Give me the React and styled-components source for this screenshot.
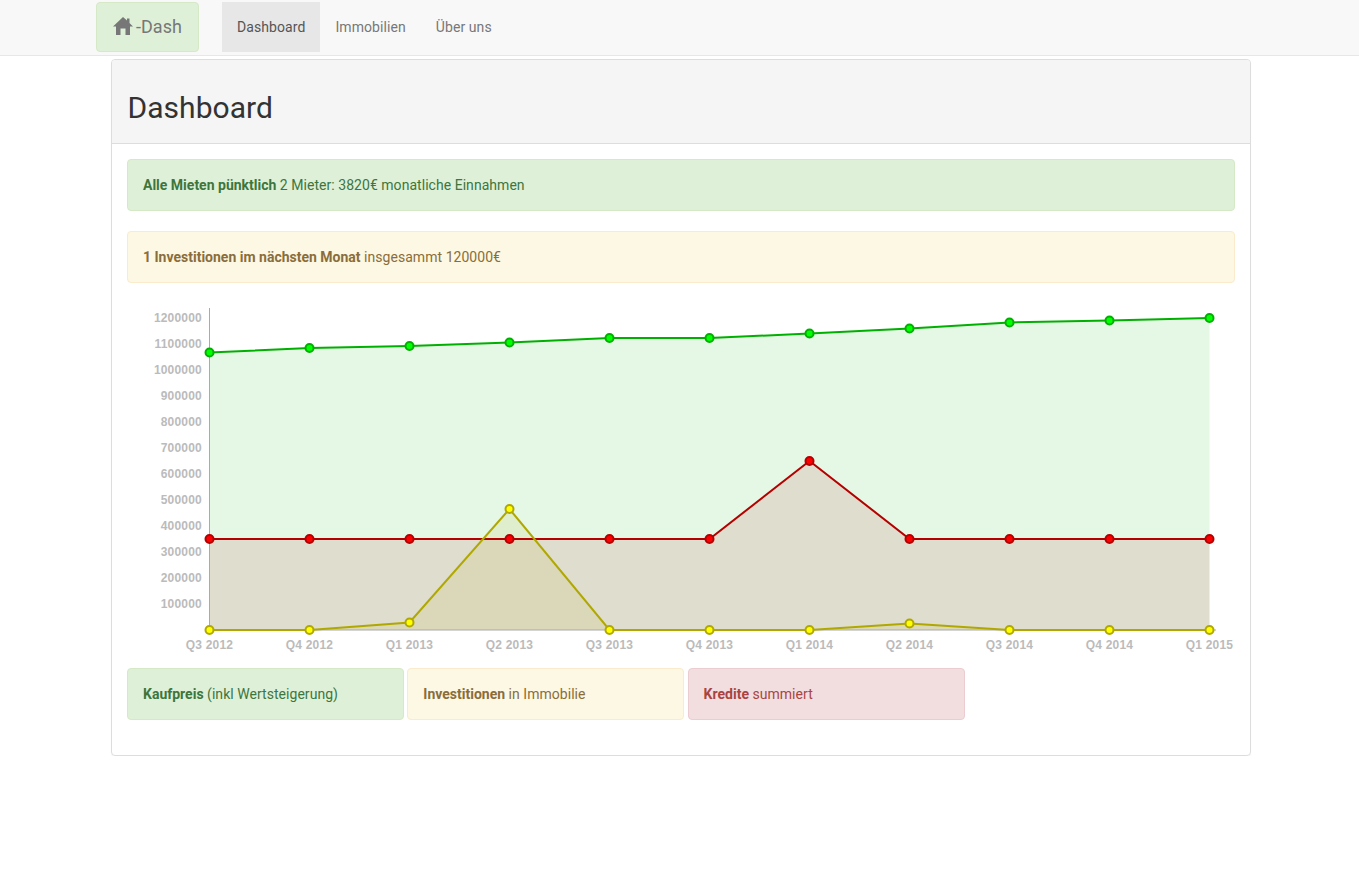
import styled, { createGlobalStyle } from 'styled-components';

const GlobalStyle = createGlobalStyle`
    * { box-sizing: border-box; }
    body {
        margin: 0;
        background: #fff;
        color: #333;
        font-family: Roboto, "Liberation Sans", sans-serif;
        font-size: 14px;
        line-height: 20px;
        letter-spacing: 0.04px;
    }
`

const Navbar = styled.nav`
    display: flex;
    align-items: flex-start;
    height: 56px;
    padding: 2px 0 0 96px;
    background: #f8f8f8;
    border-bottom: 1px solid #e7e7e7;
`

const Brand = styled.a`
    display: flex;
    align-items: center;
    gap: 3px;
    width: 103px;
    height: 50px;
    padding-left: 16px;
    margin-right: 23px;
    background: #dff0d8;
    border: 1px solid #d6e9c6;
    border-radius: 4px;
    color: #777;
    font-size: 18px;
`

const NavLink = styled.a`
    height: 50px;
    padding: 15px;
    letter-spacing: 0.08px;
    color: ${(p) => (p.$active ? '#555' : '#777')};
    background: ${(p) => (p.$active ? '#e7e7e7' : 'transparent')};
`

const Panel = styled.section`
    width: 1140px;
    height: 697px;
    margin: 3px 0 0 111px;
    border: 1px solid #ddd;
    border-radius: 4px;
    box-shadow: 0 1px 1px rgba(0, 0, 0, 0.05);
`

const PanelHeading = styled.header`
    height: 84px;
    padding: 31px 15px 0 15.5px;
    background: #f5f5f5;
    border-bottom: 1px solid #ddd;
    border-radius: 3px 3px 0 0;
`

const Title = styled.h1`
    margin: 0;
    font-size: 30px;
    font-weight: 400;
    line-height: 33px;
`

const PanelBody = styled.div`
    padding: 15px;
`

const Alert = styled.div`
    height: 52px;
    padding: 15px;
    margin-bottom: ${(p) => (p.$legend ? '0' : '20px')};
    width: ${(p) => (p.$legend ? '277px' : 'auto')};
    border: 1px solid ${(p) => p.$border};
    border-radius: 4px;
    background: ${(p) => p.$bg};
    color: ${(p) => p.$color};

    b {
        font-weight: 700;
        letter-spacing: 0;
    }
`

const ChartSvg = styled.svg`
    display: block;
    width: 1108px;
    height: 352px;
    margin-bottom: 13px;
    overflow: visible;

    text {
        font-family: "Liberation Sans", Arial, sans-serif;
        font-size: 12px;
        font-weight: 700;
        letter-spacing: 0.2px;
        fill: #bbb;
    }
`

const Legend = styled.div`
    display: flex;
    gap: 3.3px;
`

const green = { $bg: '#dff0d8', $border: '#d6e9c6', $color: '#3c763d' }
const amber = { $bg: '#fcf8e3', $border: '#faebcc', $color: '#8a6d3b' }
const red = { $bg: '#f2dede', $border: '#ebccd1', $color: '#a94442' }

const quarters = ['Q3 2012', 'Q4 2012', 'Q1 2013', 'Q2 2013', 'Q3 2013', 'Q4 2013', 'Q1 2014', 'Q2 2014', 'Q3 2014', 'Q4 2014', 'Q1 2015']
const ticks = [1200000, 1100000, 1000000, 900000, 800000, 700000, 600000, 500000, 400000, 300000, 200000, 100000]

const series = [
    { stroke: '#00b000', fill: '#00ff00', area: '#00b400', points: [352.5, 348, 346, 342.5, 338, 338, 333.5, 328.5, 322.5, 320.5, 318] },
    { stroke: '#b40000', fill: '#ff0000', area: '#b40000', points: [539, 539, 539, 539, 539, 539, 461, 539, 539, 539, 539] },
    { stroke: '#b0a800', fill: '#ffff00', area: '#b4b400', points: [630, 630, 622.5, 509, 630, 630, 630, 623.5, 630, 630, 630] },
]

const xAt = (i) => 209.5 + i * 100
const BASE = 630

function Chart() {
    return (
        <ChartSvg viewBox="127 303 1108 352">
            {series.map((s) => (
                <polygon
                    key={s.fill}
                    fill={s.area}
                    fillOpacity="0.1"
                    points={`209.5,${BASE} ${s.points.map((y, i) => `${xAt(i)},${y}`).join(' ')} 1209.5,${BASE}`}
                />
            ))}
            <path d="M209.5 308V630H1216" fill="none" stroke="#aaa" strokeWidth="1" />
            {ticks.map((t, i) => (
                <text key={t} x="202" y={322 + i * 26} textAnchor="end">{t}</text>
            ))}
            {quarters.map((q, i) => (
                <text key={q} x={xAt(i)} y="649" textAnchor="middle">{q}</text>
            ))}
            {series.map((s) => (
                <g key={s.stroke}>
                    <polyline
                        fill="none"
                        stroke={s.stroke}
                        strokeWidth="2"
                        points={s.points.map((y, i) => `${xAt(i)},${y}`).join(' ')}
                    />
                    {s.points.map((y, i) => (
                        <circle key={i} cx={xAt(i)} cy={y} r="4" fill={s.fill} stroke={s.stroke} strokeWidth="2" />
                    ))}
                </g>
            ))}
        </ChartSvg>
    )
}

function HomeIcon() {
    return (
        <svg width="20" height="20" viewBox="0 0 20 20" fill="#777">
            <path d="M10 0 L14 3.6 V1.5 H16.5 V6 L20 9.5 H17 V18 H12.5 V11.5 H7.5 V18 H3 V9.5 H0 Z" />
        </svg>
    )
}

export default function App() {
    return (
        <>
            <GlobalStyle />
            <Navbar>
                <Brand><HomeIcon />-Dash</Brand>
                <NavLink $active>Dashboard</NavLink>
                <NavLink>Immobilien</NavLink>
                <NavLink>Über uns</NavLink>
            </Navbar>
            <Panel>
                <PanelHeading>
                    <Title>Dashboard</Title>
                </PanelHeading>
                <PanelBody>
                    <Alert {...green}><b>Alle Mieten pünktlich</b> 2 Mieter: 3820€ monatliche Einnahmen</Alert>
                    <Alert {...amber}><b>1 Investitionen im nächsten Monat</b> insgesammt 120000€</Alert>
                    <Chart />
                    <Legend>
                        <Alert $legend {...green}><b>Kaufpreis</b> (inkl Wertsteigerung)</Alert>
                        <Alert $legend {...amber}><b>Investitionen</b> in Immobilie</Alert>
                        <Alert $legend {...red}><b>Kredite</b> summiert</Alert>
                    </Legend>
                </PanelBody>
            </Panel>
        </>
    )
}
